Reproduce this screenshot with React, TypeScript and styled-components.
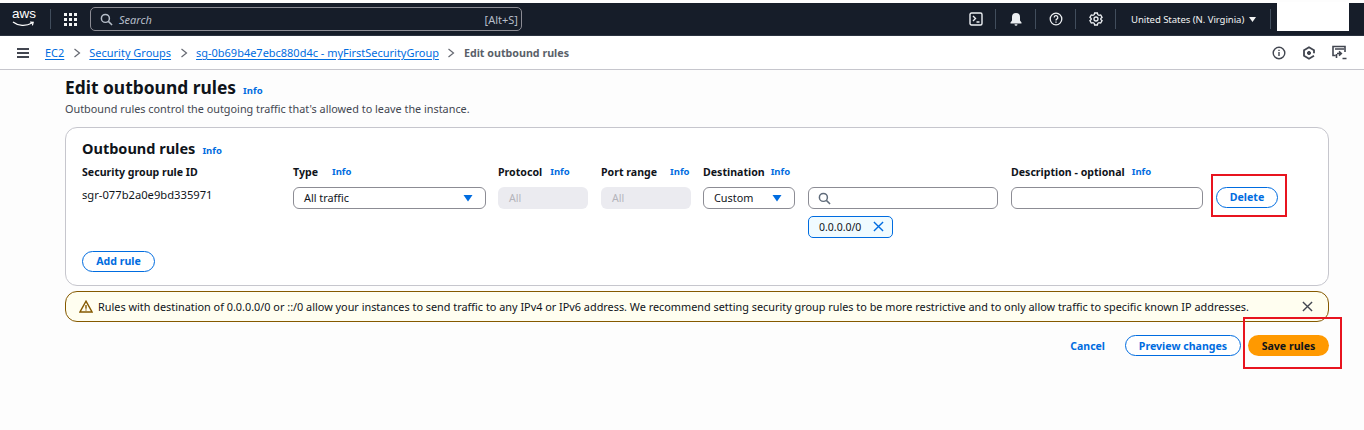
import React from "react";
import styled, { createGlobalStyle } from "styled-components";

const Global = createGlobalStyle`
  html, body { margin: 0; padding: 0; background: #fdfdfd; }
  body { font-family: "Noto Sans", "Open Sans", sans-serif; font-size: 11px; color: #0f141a; overflow: hidden; }
  * { box-sizing: border-box; }
`;

const Page = styled.div`
  position: relative;
  width: 1364px;
  height: 430px;
  padding-top: 3px;
  background: #fdfdfd;
  overflow: hidden;
`;
const TopNav = styled.header`
  height: 33px;
  background: #161d29;
  display: flex;
  align-items: center;
  color: #fff;
  border-bottom: 1px solid #2a323f;
`;
const Logo = styled.div`
  width: 40px;
  margin-left: 10px;
  height: 26px;
  display: flex;
  flex-direction: column;
  align-items: flex-start;
  padding-left: 2px;
`;
const LogoText = styled.span`
  font: 13.5px/15px "Liberation Sans", sans-serif;
`;
const LogoDivider = styled.span`
  width: 1px;
  height: 20px;
  background: #414d5c;
`;
const GridBtn = styled.div`
  margin-left: 13px;
  width: 13px;
  height: 13px;
  display: grid;
  grid-template-columns: repeat(3, 3px);
  grid-auto-rows: 3px;
  gap: 2px;
  i { background: #f2f3f3; display: block; }
`;
const SearchBox = styled.div`
  margin-left: 13px;
  width: 432px;
  height: 24px;
  border: 1px solid #8c8c94;
  border-radius: 5px;
  display: flex;
  align-items: center;
  padding: 0 3px 0 9px;
  color: #b6bec9;
  font-size: 11px;
`;
const SearchHint = styled.em`
  margin-left: 6px;
  flex: 1;
`;
const NavRight = styled.div`
  margin-left: auto;
  display: flex;
  align-items: center;
  height: 100%;
`;
const NavIcon = styled.div`
  width: 40px;
  height: 20px;
  border-right: 1px solid #414d5c;
  display: flex;
  align-items: center;
  justify-content: center;
  color: #eceff2;
`;
const Region = styled.div`
  display: flex;
  align-items: center;
  height: 20px;
  padding-left: 15px;
  width: 155px;
  border-right: 1px solid #414d5c;
  font-size: 9.55px;
  letter-spacing: -0.05px;
  color: #f2f3f3;
  gap: 5px;
`;
const Account = styled.div`
  width: 72px;
  height: 29px;
  margin: -1px 15px 0 6px;
  align-self: flex-start;
  background: #fff;
`;
const Crumbs = styled.nav`
  height: 34px;
  background: #fff;
  border-bottom: 1px solid #c6c6cd;
  display: flex;
  align-items: center;
  padding-left: 17px;
`;
const Burger = styled.div`
  width: 12px;
  height: 10px;
  margin-right: 16px;
  border-top: 2px solid #424650;
  border-bottom: 2px solid #424650;
  position: relative;
  &::after {
    content: "";
    position: absolute;
    left: 0;
    right: 0;
    top: 2px;
    height: 2px;
    background: #424650;
  }
`;
const Crumb = styled.a`
  color: #006ce0;
  text-decoration: underline;
  text-underline-offset: 2px;
  font-size: 10.98px;
`;
const Sep = styled.span`
  display: inline-flex;
  width: 25px;
  justify-content: center;
  color: #656871;
`;
const Current = styled.span`
  font-weight: 700;
  color: #5a5f69;
  font-size: 10.7px;
`;
const CrumbIcons = styled.div`
  margin-left: auto;
  display: flex;
  align-items: center;
  gap: 16px;
  margin-right: 17px;
  color: #424650;
`;
const Main = styled.main`
  padding: 3px 35px 0 65px;
`;
const TitleRow = styled.div`
  display: flex;
  align-items: baseline;
  gap: 7px;
  height: 28px;
`;
const Title = styled.h1`
  margin: 0;
  font-size: 17.4px;
  line-height: 28px;
  font-weight: 700;
  color: #0f141a;
`;
const Info = styled.a`
  color: #006ce0;
  font-size: 9.5px;
  font-weight: 700;
`;
const Sub = styled.p`
  margin: 0 0 11px;
  font-size: 10.85px;
  line-height: 15px;
  color: #424650;
`;
const Card = styled.section`
  height: 159px;
  background: #fff;
  border: 1px solid #c6c6cd;
  border-radius: 12px;
  padding: 10px 16px 0;
`;
const CardHead = styled.div`
  display: flex;
  align-items: baseline;
  gap: 7px;
  height: 20px;
`;
const CardTitle = styled.h2`
  margin: 0;
  font-size: 14.5px;
  line-height: 20px;
  font-weight: 700;
`;
const Rule = styled.div`
  display: grid;
  grid-template-columns: 211px 205px 103px 102px 105px 203px 205px 70px;
  margin-top: 5px;
`;
const Cell = styled.div`
  display: flex;
  flex-direction: column;
`;
const Label = styled.div<{ $gap?: number }>`
  height: 17px;
  display: flex;
  align-items: center;
  gap: ${(p) => p.$gap ?? 7}px;
  font-size: 10.6px;
  font-weight: 700;
  margin-bottom: 7px;
  white-space: nowrap;
`;
const RuleId = styled.div`
  font-size: 11.2px;
  line-height: 14px;
  margin-top: 1px;
  color: #0f141a;
`;
const Select = styled.div<{ $w: number }>`
  width: ${(p) => p.$w}px;
  height: 22px;
  border: 1px solid #8c8c94;
  border-radius: 6px;
  background: #fff;
  display: flex;
  align-items: center;
  justify-content: space-between;
  padding: 0 12px 1px 10px;
  font-size: 10.85px;
`;
const Disabled = styled.div`
  width: 90px;
  height: 22px;
  background: #ebebf0;
  border-radius: 6px;
  display: flex;
  align-items: center;
  padding-left: 11px;
  font-size: 10.6px;
  color: #b4b4bb;
`;
const Input = styled.div<{ $w: number }>`
  width: ${(p) => p.$w}px;
  height: 22px;
  border: 1px solid #8c8c94;
  border-radius: 6px;
  background: #fff;
  display: flex;
  align-items: center;
  padding-left: 9px;
  color: #5f6b7a;
`;
const Chip = styled.div`
  margin-top: 7px;
  width: 85px;
  height: 22px;
  border: 1px solid #006ce0;
  border-radius: 5px;
  background: #f0fbff;
  display: flex;
  align-items: center;
  justify-content: space-between;
  padding: 0 8px 1px 10px;
  font-size: 10.5px;
  color: #0f141a;
`;
const Pill = styled.button<{ $w: number }>`
  width: ${(p) => p.$w}px;
  height: 21px;
  border: 1px solid #006ce0;
  border-radius: 11px;
  background: #fff;
  color: #006ce0;
  font: 700 10.6px "Noto Sans", sans-serif;
  padding: 0 0 2px;
  display: flex;
  align-items: center;
  justify-content: center;
`;
const DeleteCell = styled.div`
  padding-top: 24px;
`;
const AddWrap = styled.div`
  margin-top: 13px;
`;
const Alert = styled.div`
  margin-top: 5px;
  height: 31px;
  background: #fffef0;
  border: 1px solid #855900;
  border-radius: 12px;
  display: flex;
  align-items: center;
  padding: 0 15px 0 13px;
  font-size: 10.86px;
  color: #0f141a;
`;
const AlertText = styled.span`
  margin-left: 5px;
  flex: 1;
  white-space: nowrap;
`;
const Footer = styled.div`
  margin-top: 13px;
  display: flex;
  justify-content: flex-end;
  align-items: center;
  button { padding: 0; }
`;
const Cancel = styled.a`
  color: #006ce0;
  font-weight: 700;
  font-size: 10.5px;
  margin-right: 20px;
`;
const Save = styled.button`
  width: 81px;
  height: 21px;
  margin-left: 7px;
  border: 0;
  border-radius: 11px;
  background: #ff9900;
  color: #0f141a;
  font: 700 10.6px "Noto Sans", sans-serif;
`;
const Mark = styled.div<{ $x: number; $y: number; $w: number; $h: number }>`
  position: absolute;
  left: ${(p) => p.$x}px;
  top: ${(p) => p.$y}px;
  width: ${(p) => p.$w}px;
  height: ${(p) => p.$h}px;
  border: 2px solid #e8141f;
  pointer-events: none;
`;

const Caret = () => (
  <svg width="10" height="8" viewBox="0 0 10 8"><path d="M0.5 1h9L5 7.5z" fill="#006ce0" /></svg>
);
const Magnifier = ({ c = "currentColor" }: { c?: string }) => (
  <svg width="13" height="13" viewBox="0 0 14 14" fill="none" stroke={c} strokeWidth="1.6">
    <circle cx="5.8" cy="5.8" r="4.3" /><path d="M9 9l4 4" />
  </svg>
);
const Chevron = () => (
  <svg width="8" height="10" viewBox="0 0 8 10" fill="none" stroke="currentColor" strokeWidth="1.2"><path d="M1.5 1l5 4-5 4" /></svg>
);
const Cross = ({ c, s }: { c: string; s: number }) => (
  <svg width={s} height={s} viewBox="0 0 12 12" fill="none" stroke={c} strokeWidth="1.5"><path d="M1 1l10 10M11 1L1 11" /></svg>
);

const crumbs = ["EC2", "Security Groups", "sg-0b69b4e7ebc880d4c - myFirstSecurityGroup"];

export default function App() {
  return (
    <Page>
      <Global />
      <TopNav>
        <Logo>
          <LogoText>aws</LogoText>
          <svg width="23" height="7" viewBox="0 0 23 7" fill="none" stroke="#fff" strokeWidth="1.2">
            <path d="M1 1c5 4 13 4.5 19 1M18 1l3.2.3-.8 3" />
          </svg>
        </Logo>
        <LogoDivider />
        <GridBtn>{Array.from({ length: 9 }, (_, i) => <i key={i} />)}</GridBtn>
        <SearchBox>
          <Magnifier />
          <SearchHint>Search</SearchHint>
          <span>[Alt+S]</span>
        </SearchBox>
        <NavRight>
          <NavIcon>
            <svg width="14" height="14" viewBox="0 0 14 14" fill="none" stroke="currentColor" strokeWidth="1.4">
              <rect x="1" y="1" width="12" height="12" rx="1.5" /><path d="M4 4l2.5 2.5L4 9M7.5 10H10.5" />
            </svg>
          </NavIcon>
          <NavIcon>
            <svg width="14" height="14" viewBox="0 0 14 14" fill="currentColor">
              <path d="M7 1a4 4 0 0 0-4 4v3.5L1.5 10.500V11.500h11V10.500L11 8.500V5a4 4 0 0 0-4-4zM5.500 12.300h3a1.500 1.500 0 0 1-3 0z" />
            </svg>
          </NavIcon>
          <NavIcon>
            <svg width="14" height="14" viewBox="0 0 14 14" fill="none" stroke="currentColor" strokeWidth="1.3">
              <circle cx="7" cy="7" r="5.800" /><path d="M5.200 5.500a1.800 1.800 0 1 1 2.600 1.600C7.200 7.500 7 7.800 7 8.600M7 9.500v1.200" />
            </svg>
          </NavIcon>
          <NavIcon>
            <svg width="14" height="14" viewBox="0 0 14 14" fill="none" stroke="currentColor" strokeWidth="1.3">
              <path d="M5.600 1h2.800l.4 1.700 1.200.7 1.700-.5 1.400 2.400-1.300 1.200v1l1.300 1.200-1.400 2.400-1.700-.5-1.200.7L8.400 13H5.600l-.4-1.700-1.200-.7-1.700.5L.9 8.700l1.300-1.200v-1L.9 5.300l1.400-2.400 1.700.5 1.200-.7z" />
              <circle cx="7" cy="7" r="2" />
            </svg>
          </NavIcon>
          <Region>
            United States (N. Virginia)
            <svg width="7" height="5" viewBox="0 0 7 5"><path d="M0 0h7L3.500 5z" fill="#f2f3f3" /></svg>
          </Region>
          <Account />
        </NavRight>
      </TopNav>
      <Crumbs>
        <Burger />
        {crumbs.map((c) => (
          <React.Fragment key={c}>
            <Crumb>{c}</Crumb>
            <Sep><Chevron /></Sep>
          </React.Fragment>
        ))}
        <Current>Edit outbound rules</Current>
        <CrumbIcons>
          <svg width="14" height="14" viewBox="0 0 14 14" fill="none" stroke="currentColor" strokeWidth="1.4">
            <circle cx="7" cy="7" r="5.800" /><path d="M7 6v4M7 3.800v1.200" />
          </svg>
          <svg width="14" height="14" viewBox="0 0 14 14" fill="none" stroke="currentColor" strokeWidth="1.8">
            <path d="M12 9.800L7 12.800l-5-3V4.200L7 1.200l5 3v3" /><circle cx="7" cy="7" r="1.600" fill="currentColor" strokeWidth="1" />
          </svg>
          <svg width="15" height="15" viewBox="0 0 15 15" fill="none" stroke="currentColor" strokeWidth="1.6">
            <path d="M3.500 10.500H1V1.500h12V7M3 4h9M5 8.500h4M7 6.300L9.300 8.500 7 10.700M4.500 9v4M10.500 13.500H14.500" />
          </svg>
        </CrumbIcons>
      </Crumbs>
      <Main>
        <TitleRow>
          <Title>Edit outbound rules</Title>
          <Info>Info</Info>
        </TitleRow>
        <Sub>Outbound rules control the outgoing traffic that's allowed to leave the instance.</Sub>
        <Card>
          <CardHead>
            <CardTitle>Outbound rules</CardTitle>
            <Info>Info</Info>
          </CardHead>
          <Rule>
            <Cell>
              <Label>Security group rule ID</Label>
              <RuleId>sgr-077b2a0e9bd335971</RuleId>
            </Cell>
            <Cell>
              <Label $gap={14}>Type <Info>Info</Info></Label>
              <Select $w={193}>All traffic <Caret /></Select>
            </Cell>
            <Cell>
              <Label $gap={8}>Protocol <Info>Info</Info></Label>
              <Disabled>All</Disabled>
            </Cell>
            <Cell>
              <Label $gap={13}>Port range <Info>Info</Info></Label>
              <Disabled>All</Disabled>
            </Cell>
            <Cell>
              <Label $gap={6}>Destination <Info>Info</Info></Label>
              <Select $w={92}>Custom <Caret /></Select>
            </Cell>
            <Cell>
              <Label>&nbsp;</Label>
              <Input $w={190}><Magnifier c="#5f6b7a" /></Input>
              <Chip>0.0.0.0/0 <Cross c="#006ce0" s={11} /></Chip>
            </Cell>
            <Cell>
              <Label>Description - optional <Info>Info</Info></Label>
              <Input $w={192} />
            </Cell>
            <DeleteCell>
              <Pill $w={62}>Delete</Pill>
            </DeleteCell>
          </Rule>
          <AddWrap>
            <Pill $w={73}>Add rule</Pill>
          </AddWrap>
        </Card>
        <Alert>
          <svg width="14" height="13" viewBox="0 0 14 13" fill="none" stroke="#855900" strokeWidth="1.4">
            <path d="M7 1.200L13 12H1zM7 5v3.800M7 9.600v1" />
          </svg>
          <AlertText>Rules with destination of 0.0.0.0/0 or ::/0 allow your instances to send traffic to any IPv4 or IPv6 address. We recommend setting security group rules to be more restrictive and to only allow traffic to specific known IP addresses.</AlertText>
          <Cross c="#424650" s={11} />
        </Alert>
        <Footer>
          <Cancel>Cancel</Cancel>
          <Pill $w={116}>Preview changes</Pill>
          <Save>Save rules</Save>
        </Footer>
      </Main>
      <Mark $x={1211} $y={174} $w={76} $h={43} />
      <Mark $x={1243} $y={317} $w={99} $h={52} />
    </Page>
  );
}
